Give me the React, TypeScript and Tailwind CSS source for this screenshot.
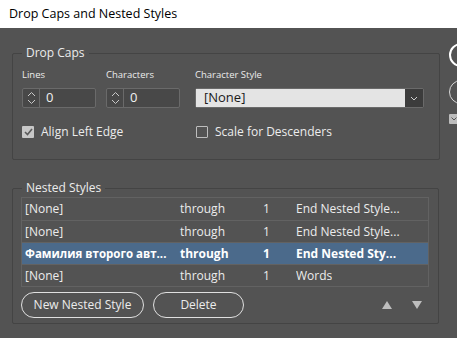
import React from 'react';

const rows = [
  { style: '[None]', mode: 'through', n: '1', end: 'End Nested Style...', sel: false },
  { style: '[None]', mode: 'through', n: '1', end: 'End Nested Style...', sel: false },
  { style: 'Фамилия второго авт...', mode: 'through', n: '1', end: 'End Nested Sty...', sel: true },
  { style: '[None]', mode: 'through', n: '1', end: 'Words', sel: false },
];

const Spinner: React.FC = () => (
  <div className="flex h-[20px] w-[74px] rounded-[2px] border border-[#6a6a6a] bg-[#484848]">
    <div className="flex w-[17px] items-center justify-center border-r border-[#6a6a6a]">
      <svg width="9" height="14" viewBox="0 0 9 14" fill="none" stroke="#c8c8c8" strokeWidth="1">
        <path d="M1 5 L4.5 1.5 L8 5" />
        <path d="M1 9 L4.5 12.5 L8 9" />
      </svg>
    </div>
    <div className="flex items-center pl-[6px] text-[13px] text-[#f0f0f0]">0</div>
  </div>
);

const App: React.FC = () => {
  return (
    <div className="flex h-[338px] w-[457px] flex-col overflow-hidden font-['Open_Sans',sans-serif]">
      <div className="flex h-[28px] items-center bg-white pl-[9px] text-[12.5px] text-black">
        Drop Caps and Nested Styles
      </div>
      <div className="flex flex-1 bg-[#535353] text-[#ececec]">
        <div className="ml-[12px] w-[427px] shrink-0">
          <fieldset className="mt-[17px] h-[115px] rounded-[2px] border border-[#444444] pr-[15px] pl-[9px]">
            <legend className="px-[4px] text-[12px] leading-[16px]">Drop Caps</legend>
            <div className="mt-[8px] flex text-[9.5px] leading-[12px]">
              <div className="w-[84px]">Lines</div>
              <div className="w-[89px]">Characters</div>
              <div>Character Style</div>
            </div>
            <div className="mt-[7px] flex">
              <Spinner />
              <div className="ml-[10px]">
                <Spinner />
              </div>
              <div className="ml-[15px] flex h-[20px] w-[229px] rounded-[2px] border border-[#6a6a6a]">
                <div className="flex flex-1 items-center bg-[#e4e4e4] pl-[8px] text-[13px] text-[#1a1a1a]">[None]</div>
                <div className="flex w-[18px] items-center justify-center bg-[#3c3c3c]">
                  <svg width="8" height="5" viewBox="0 0 8 5" fill="none" stroke="#d0d0d0" strokeWidth="1">
                    <path d="M1 1 L4 4 L7 1" />
                  </svg>
                </div>
              </div>
            </div>
            <div className="mt-[15px] flex items-center text-[12px]">
              <div className="flex w-[173px] items-center">
                <div className="flex h-[12px] w-[12px] items-center justify-center rounded-[1px] bg-[#c8c8c8]">
                  <svg width="9" height="8" viewBox="0 0 9 8" fill="none" stroke="#5a5a5a" strokeWidth="1.6">
                    <path d="M1 4 L3.5 6.5 L8 1" />
                  </svg>
                </div>
                <span className="ml-[7px]">Align Left Edge</span>
              </div>
              <div className="ml-[1px] flex items-center">
                <div className="h-[12px] w-[12px] rounded-[1px] border border-[#bdbdbd]" />
                <span className="ml-[7px]">Scale for Descenders</span>
              </div>
            </div>
          </fieldset>

          <fieldset className="mt-[20px] h-[144px] rounded-[2px] border border-[#444444] pr-[9px] pl-[8px]">
            <legend className="ml-[1px] px-[4px] text-[12px] leading-[16px]">Nested Styles</legend>
            <div className="mt-[1px] border border-[#626262] text-[12px]">
              {rows.map((r, i) => (
                <div
                  key={i}
                  className={`flex h-[22px] items-center whitespace-nowrap ${i > 0 ? 'border-t border-[#626262]' : ''} ${
                    r.sel ? 'bg-[#4b6a8b] font-bold text-white' : ''
                  }`}
                >
                  <div className={`w-[158px] overflow-hidden pl-[3px] ${r.sel ? 'text-[11.5px]' : ''}`}>{r.style}</div>
                  <div className="w-[83px]">{r.mode}</div>
                  <div className="w-[33px]">{r.n}</div>
                  <div className="overflow-hidden">{r.end}</div>
                </div>
              ))}
            </div>
            <div className="mt-[5px] flex items-center">
              <button className="h-[26px] w-[123px] rounded-full border border-[#e0e0e0] text-[12px]">New Nested Style</button>
              <button className="ml-[9px] h-[26px] w-[91px] rounded-full border border-[#e0e0e0] text-[12px]">Delete</button>
              <div className="ml-auto mr-[7px] flex gap-[20px]">
                <svg width="10" height="8" viewBox="0 0 10 8" fill="#bdbdbd">
                  <path d="M5 0 L10 8 L0 8 Z" />
                </svg>
                <svg width="10" height="8" viewBox="0 0 10 8" fill="#bdbdbd">
                  <path d="M0 0 L10 0 L5 8 Z" />
                </svg>
              </div>
            </div>
          </fieldset>
        </div>

        <div className="ml-[10px] flex shrink-0 flex-col">
          <div className="mt-[15px] h-[24px] w-[80px] rounded-full border-2 border-white" />
          <div className="mt-[13px] h-[24px] w-[80px] rounded-full border border-[#d8d8d8]" />
          <div className="mt-[10px] flex h-[10px] w-[10px] items-center justify-center rounded-[1px] bg-[#bdbdbd]">
            <svg width="6" height="4" viewBox="0 0 6 4" fill="none" stroke="#555" strokeWidth="1">
              <path d="M0.5 0.5 L3 3 L5.5 0.5" />
            </svg>
          </div>
        </div>
      </div>
    </div>
  );
};

export default App;
